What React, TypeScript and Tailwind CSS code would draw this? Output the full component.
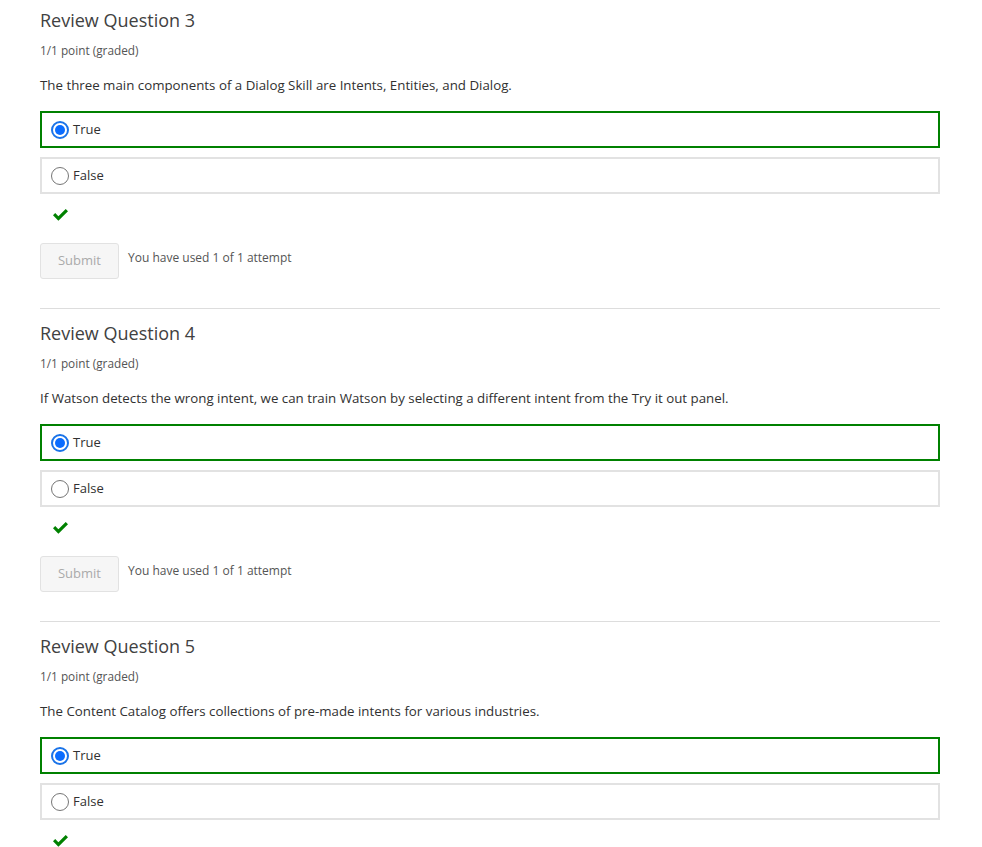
import React from "react";

const questions = [
  { n: 3, text: "The three main components of a Dialog Skill are Intents, Entities, and Dialog." },
  { n: 4, text: "If Watson detects the wrong intent, we can train Watson by selecting a different intent from the Try it out panel." },
  { n: 5, text: "The Content Catalog offers collections of pre-made intents for various industries." },
];

function Radio({ checked }: { checked: boolean }) {
  return checked ? (
    <span className="w-[18px] h-[18px] rounded-full border-2 border-[#1a73e8] bg-white flex items-center justify-center shrink-0">
      <span className="w-[10px] h-[10px] rounded-full bg-[#0a6cff]" />
    </span>
  ) : (
    <span className="w-[18px] h-[18px] rounded-full border border-[#767676] bg-white shrink-0" />
  );
}

function Check() {
  return (
    <svg width="15" height="12" viewBox="0 0 15 12">
      <polygon points="0,6.3 2.2,4.1 5.4,7.3 12.7,0 15,2.2 5.4,11.7" fill="#008100" />
    </svg>
  );
}

function Question({ n, text, last }: { n: number; text: string; last: boolean }) {
  return (
    <div className={last ? "" : "border-b border-[#dddddd]"}>
      <h3 className="text-[18px] leading-[27px] text-[#414141] pt-[7px]">Review Question {n}</h3>
      <div className="text-[11.8px] leading-[18px] text-[#555] mt-[7px]">1/1 point (graded)</div>
      <p className="text-[13.3px] leading-[20px] text-[#313131] mt-[16px]">{text}</p>
      <div className="mt-[16px] flex flex-col gap-[9px]">
        <div className="h-[37px] border-2 border-[#008100] flex items-center pl-[9px] gap-[4px] text-[13px] text-[#313131]">
          <Radio checked />
          <span>True</span>
        </div>
        <div className="h-[37px] border-2 border-[#e2e2e2] flex items-center pl-[9px] gap-[4px] text-[13px] text-[#313131]">
          <Radio checked={false} />
          <span>False</span>
        </div>
      </div>
      <div className="pl-[13px] mt-[15px] h-[12px]">
        <Check />
      </div>
      {!last && (
        <div className="mt-[22px] flex items-start gap-[9px] pb-[29px]">
          <button className="w-[79px] h-[36px] bg-[#f6f6f6] border border-[#e2e2e2] rounded-[3px] text-[13px] text-[#aaaaaa]">
            Submit
          </button>
          <span className="text-[12px] text-[#555] mt-[6px]">You have used 1 of 1 attempt</span>
        </div>
      )}
    </div>
  );
}

export default function App() {
  return (
    <div className="w-[982px] h-[847px] bg-white overflow-hidden" style={{ fontFamily: '"Open Sans", sans-serif' }}>
      <div className="ml-[40px] w-[900px] flex flex-col gap-[4px]">
        {questions.map((q, i) => (
          <Question key={q.n} n={q.n} text={q.text} last={i === questions.length - 1} />
        ))}
      </div>
    </div>
  );
}
